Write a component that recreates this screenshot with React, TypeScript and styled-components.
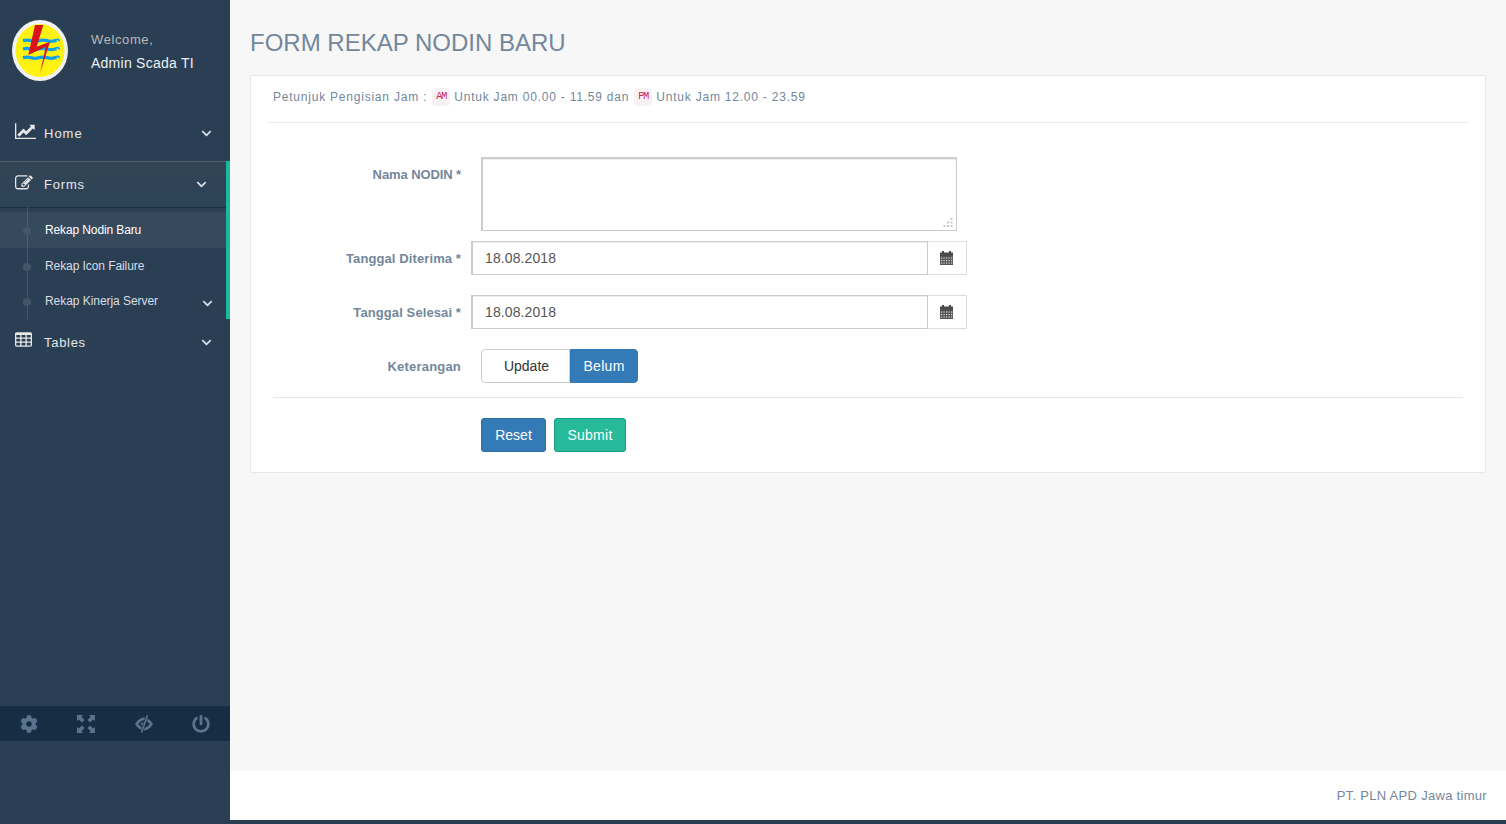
import React from "react";
import styled, { createGlobalStyle } from "styled-components";
import { FaChevronDown, FaCog, FaPowerOff } from "react-icons/fa";

const Global = createGlobalStyle`
  html, body { margin: 0; padding: 0; height: 100%; overflow: hidden; }
  body { font-family: "Liberation Sans", Arial, sans-serif; font-size: 13px; color: #73879C; background: #F7F7F7; }
  * { box-sizing: border-box; }
`;

const Shell = styled.div`
  display: grid;
  grid-template-columns: 230px 1fr;
  height: 824px;
`;

const Sidebar = styled.aside`
  display: grid;
  grid-template-rows: 706px 35px 1fr;
  background: #2A3F54;
`;

const SideTop = styled.div`
  display: flex;
  flex-direction: column;
`;

const Profile = styled.div`
  display: flex;
  height: 110px;
  padding: 20px 0 0 12px;
`;

const ProfileInfo = styled.div`
  margin-left: 23px;
  padding-top: 10px;
`;

const Welcome = styled.div`
  font-size: 13px;
  line-height: 20px;
  letter-spacing: 0.6px;
  color: #BAB8B8;
`;

const UserName = styled.div`
  margin-top: 3px;
  font-size: 14px;
  line-height: 20px;
  letter-spacing: 0.25px;
  color: #ECF0F1;
`;

const NavRow = styled.div<{ $active?: boolean }>`
  display: flex;
  align-items: center;
  height: 46px;
  padding: 0 ${(p) => (p.$active ? "19px" : "18px")} 0 15px;
  color: #E7E7E7;
  ${(p) =>
    p.$active &&
    `
    background: linear-gradient(#334556, #2C4257);
    box-shadow: rgba(0,0,0,.25) 0 1px 0, inset rgba(255,255,255,.16) 0 1px 0;
  `}
`;

const NavIcon = styled.span`
  display: flex;
  width: 29px;
  margin-top: -3px;
  color: #E7E7E7;
`;

const NavLabel = styled.span<{ $spacing: number }>`
  flex: 1;
  font-size: 13px;
  letter-spacing: ${(p) => p.$spacing}px;
`;

const Chevron = styled(FaChevronDown)`
  width: 11px;
  height: 11px;
  color: #D5DCE3;
`;

const Section = styled.div`
  border-right: 4px solid #1ABB9C;
`;

const SectionWrap = styled.div`
  margin-top: 5px;
`;

const SubMenu = styled.div`
  position: relative;
  padding-top: 5px;
  &::before {
    content: "";
    position: absolute;
    left: 27px;
    top: 0;
    bottom: 0;
    width: 1px;
    background: #425668;
  }
`;

const SubItem = styled.div<{ $active?: boolean; $h: number }>`
  position: relative;
  display: flex;
  align-items: center;
  height: ${(p) => p.$h}px;
  padding: 0 13px 0 45px;
  font-size: 12px;
  color: ${(p) => (p.$active ? "#FFFFFF" : "#D9DEE4")};
  background: ${(p) => (p.$active ? "rgba(255,255,255,0.06)" : "transparent")};
  &::before {
    content: "";
    position: absolute;
    left: 23px;
    top: 50%;
    margin-top: -3px;
    width: 8px;
    height: 8px;
    border-radius: 50%;
    background: #425668;
  }
`;

const SubLabel = styled.span<{ $spacing: number }>`
  flex: 1;
  letter-spacing: ${(p) => p.$spacing}px;
`;

const SubChevron = styled(Chevron)`
  margin-top: 4px;
`;

const SideFooter = styled.div`
  display: grid;
  grid-template-columns: repeat(4, 1fr);
  align-items: center;
  justify-items: center;
  background: #172D44;
  color: #5A738E;
  font-size: 18px;
`;

const FooterIcon = styled.span`
  display: flex;
`;

const Main = styled.main`
  display: grid;
  grid-template-rows: 1fr 49px 4px;
  min-width: 0;
`;

const Content = styled.div`
  padding: 0 20px;
`;

const Title = styled.h3`
  margin: 0;
  height: 75px;
  padding-top: 28px;
  font-size: 24px;
  line-height: 30px;
  font-weight: 400;
  color: #73879C;
`;

const Panel = styled.section`
  height: 398px;
  background: #fff;
  border: 1px solid #E6E9ED;
`;

const Note = styled.div`
  display: flex;
  align-items: center;
  height: 47px;
  margin: 0 17px;
  padding: 0 5px 5px;
  border-bottom: 1px solid #E6E9ED;
  font-size: 12px;
  letter-spacing: 0.78px;
  color: #73879C;
  white-space: pre;
`;

const Code = styled.code`
  display: inline-flex;
  align-items: center;
  justify-content: center;
  width: 18px;
  height: 18px;
  margin: 0 4px 0 1px;
  border-radius: 4px;
  background: #F9F2F4;
  color: #C7254E;
  font-family: "Liberation Mono", monospace;
  font-size: 10px;
  letter-spacing: -1px;
`;

const Form = styled.form`
  padding: 34px 10px 0;
`;

const Row = styled.div<{ $gap: number }>`
  display: grid;
  grid-template-columns: 200px 1fr;
  column-gap: 10px;
  margin-bottom: ${(p) => p.$gap}px;
`;

const Label = styled.label<{ $spacing?: number }>`
  padding-top: 8px;
  line-height: 20px;
  text-align: right;
  font-size: 13px;
  font-weight: 700;
  letter-spacing: ${(p) => p.$spacing ?? 0.1}px;
  color: #73879C;
`;

const TextareaWrap = styled.div`
  position: relative;
  width: 476px;
  height: 74px;
  margin-left: 10px;
`;

const Textarea = styled.textarea`
  display: block;
  width: 100%;
  height: 100%;
  border: 1px solid #CCCCCC;
  border-left-width: 2px;
  border-top-width: 2px;
  box-shadow: inset 0 1px 1px rgba(0, 0, 0, 0.075);
  outline: none;
  resize: none;
`;

const Grip = styled.svg`
  position: absolute;
  right: 4px;
  bottom: 3px;
`;

const InputGroup = styled.div`
  display: flex;
  width: 496px;
  height: 34px;
`;

const DateInput = styled.input`
  width: 457px;
  height: 34px;
  padding: 0 12px;
  border: 1px solid #CCCCCC;
  border-left-width: 2px;
  box-shadow: inset 0 1px 1px rgba(0, 0, 0, 0.075);
  font-family: "Liberation Sans", Arial, sans-serif;
  font-size: 14px;
  letter-spacing: 0.1px;
  color: #555555;
  outline: none;
`;

const Addon = styled.span`
  display: flex;
  align-items: center;
  justify-content: center;
  width: 39px;
  padding-right: 2px;
  border: 1px solid #DDDDDD;
  border-left: 0;
`;

const Toggle = styled.div`
  display: flex;
  margin-left: 10px;
`;

const ToggleButton = styled.button<{ $on?: boolean }>`
  height: 34px;
  width: ${(p) => (p.$on ? "68px" : "89px")};
  padding: 0 0 0 ${(p) => (p.$on ? "0" : "2px")};
  border: 1px solid ${(p) => (p.$on ? "#337AB7" : "#CCCCCC")};
  border-radius: ${(p) => (p.$on ? "0 4px 4px 0" : "4px 0 0 4px")};
  background: ${(p) => (p.$on ? "#337AB7" : "#FFFFFF")};
  color: ${(p) => (p.$on ? "#FFFFFF" : "#333333")};
  font-family: "Liberation Sans", Arial, sans-serif;
  font-size: 14px;
  letter-spacing: ${(p) => (p.$on ? "0.3px" : "0")};
`;

const Divider = styled.hr`
  height: 1px;
  margin: 14px 12px 20px;
  border: 0;
  background: #E5E5E5;
`;

const Actions = styled.div`
  display: flex;
  gap: 8px;
  margin-left: 220px;
`;

const ActionButton = styled.button<{ $kind: "primary" | "success" }>`
  height: 34px;
  width: ${(p) => (p.$kind === "primary" ? "65px" : "72px")};
  padding: 0;
  border: 1px solid ${(p) => (p.$kind === "primary" ? "#2E6DA4" : "#169F85")};
  border-radius: 3px;
  background: ${(p) => (p.$kind === "primary" ? "#337AB7" : "#26B99A")};
  color: #FFFFFF;
  font-family: "Liberation Sans", Arial, sans-serif;
  font-size: 14px;
  letter-spacing: ${(p) => (p.$kind === "primary" ? "0" : "0.25px")};
`;

const PageFooter = styled.footer`
  display: flex;
  align-items: center;
  justify-content: flex-end;
  padding: 0 19px 0 0;
  background: #FFFFFF;
  font-size: 13px;
  letter-spacing: 0.3px;
  color: #73879C;
`;

const BottomStrip = styled.div`
  background: #2A3F54;
`;

const Logo = () => (
  <svg width="56" height="61" viewBox="0 0 56 61">
    <ellipse cx="28" cy="30.5" rx="28" ry="30.5" fill="#F2F2F2" />
    <ellipse cx="28" cy="30.5" rx="24.5" ry="26.5" fill="#FFF212" />
    <g fill="none" stroke="#0FA0E8" strokeWidth="3.3">
      <path d="M11 20.700q4-1.200 8 0t8 0 8 0 8 0 3 0" />
      <path d="M11 29q4-1.200 8 0t8 0 8 0 8 0 3 0" />
      <path d="M11 37.700q4-1.200 8 0t8 0 8 0 8 0 3 0" />
    </g>
    <path d="M23 5L16.300 35L33.700 26.700L28 53.300L38 21.700L24.700 26.700L31.300 5z" fill="#D7141A" />
  </svg>
);

const LineChartIcon = () => (
  <svg width="21" height="18.400" viewBox="0 0 2048 1792" fill="#E7E7E7">
    <path d="M2048 1536v128h-2048v-1536h128v1408h1920zm-128-1248v435q0 21-19.500 29.500t-35.500-7.500l-121-121-633 633q-10 10-23 10t-23-10l-233-233-416 416-192-192 585-585q10-10 23-10t23 10l233 233 464-464-121-121q-16-16-7.500-35.500t29.500-19.500h435q14 0 23 9t9 23z" />
  </svg>
);

const EditIcon = () => (
  <svg width="18" height="18" viewBox="0 0 1800 1792" fill="#E7E7E7">
    <path d="M888 1184l116-116-152-152-116 116v56h96v96h56zm440-720q-16-16-33 1l-350 350q-17 17-1 33t33-1l350-350q17-17 1-33zm80 594v190q0 119-84.500 203.500t-203.500 84.500h-832q-119 0-203.500-84.500t-84.500-203.500v-832q0-119 84.500-203.500t203.500-84.500h832q63 0 117 25 15 7 18 23 3 17-9 29l-49 49q-14 14-32 8-23-6-45-6h-832q-66 0-113 47t-47 113v832q0 66 47 113t113 47h832q66 0 113-47t47-113v-126q0-13 9-22l64-64q15-15 35-7t20 29zm-96-738l288 288-672 672h-288v-288zm444 132l-92 92-288-288 92-92q28-28 68-28t68 28l152 152q28 28 28 68t-28 68z" />
  </svg>
);

const TableIcon = () => (
  <svg width="17" height="18.300" viewBox="0 0 1664 1792" fill="#E7E7E7">
    <path d="M512 1376v-192q0-14-9-23t-23-9h-320q-14 0-23 9t-9 23v192q0 14 9 23t23 9h320q14 0 23-9t9-23zm0-384v-192q0-14-9-23t-23-9h-320q-14 0-23 9t-9 23v192q0 14 9 23t23 9h320q14 0 23-9t9-23zm512 384v-192q0-14-9-23t-23-9h-320q-14 0-23 9t-9 23v192q0 14 9 23t23 9h320q14 0 23-9t9-23zm-512-768v-192q0-14-9-23t-23-9h-320q-14 0-23 9t-9 23v192q0 14 9 23t23 9h320q14 0 23-9t9-23zm512 384v-192q0-14-9-23t-23-9h-320q-14 0-23 9t-9 23v192q0 14 9 23t23 9h320q14 0 23-9t9-23zm512 384v-192q0-14-9-23t-23-9h-320q-14 0-23 9t-9 23v192q0 14 9 23t23 9h320q14 0 23-9t9-23zm-512-768v-192q0-14-9-23t-23-9h-320q-14 0-23 9t-9 23v192q0 14 9 23t23 9h320q14 0 23-9t9-23zm512 384v-192q0-14-9-23t-23-9h-320q-14 0-23 9t-9 23v192q0 14 9 23t23 9h320q14 0 23-9t9-23zm0-384v-192q0-14-9-23t-23-9h-320q-14 0-23 9t-9 23v192q0 14 9 23t23 9h320q14 0 23-9t9-23zm128-320v1088q0 66-47 113t-113 47h-1344q-66 0-113-47t-47-113v-1088q0-66 47-113t113-47h1344q66 0 113 47t47 113z" />
  </svg>
);

const CalendarIcon = () => (
  <svg width="13" height="14" viewBox="0 0 13 14">
    <path d="M0 1.500h2V0h2v1.500h5V0h2v1.500h2V6H0z" fill="#4A4A4A" />
    <rect y="5" width="13" height="9" fill="#555555" />
    <g fill="#E4E8EC">
      {[1, 3.5, 6, 8.5, 11].map((x) =>
        [6.5, 9, 11.5].map((y) => <rect key={`${x}-${y}`} x={x} y={y} width="1.200" height="1.100" />)
      )}
    </g>
  </svg>
);

const FullscreenIcon = () => (
  <svg width="18" height="18" viewBox="0 0 18 18" fill="#5A738E">
    <path d="M0 0h6L4.400 1.700 7.500 5 5 7.500 1.700 4.400 0 6z" />
    <path d="M18 0v6l-1.700-1.600L13 7.500 10.500 5l3.100-3.300L12 0z" />
    <path d="M0 18v-6l1.700 1.600L5 10.500 7.500 13l-3.100 3.300L6 18z" />
    <path d="M18 18h-6l1.600-1.700L10.500 13l2.500-2.500 3.300 3.100L18 12z" />
  </svg>
);

const EyeCloseIcon = () => (
  <svg width="18" height="18" viewBox="0 0 18 18">
    <path
      fillRule="evenodd"
      fill="#5A738E"
      d="M0 9Q4 2.500 9 2.500Q14 2.500 18 9Q14 15.500 9 15.500Q4 15.500 0 9ZM3.200 9Q6 12.800 9 12.800Q12 12.800 14.800 9Q12 5.200 9 5.200Q6 5.200 3.200 9Z"
    />
    <circle cx="7.800" cy="9" r="1.800" fill="#5A738E" />
    <path d="M12.500 0L6.500 18" stroke="#172D44" strokeWidth="2.800" />
    <path d="M12.500 0.300L6.500 17.700" stroke="#5A738E" strokeWidth="1.600" />
  </svg>
);

const GripDots = () => (
  <Grip width="10" height="10" viewBox="0 0 10 10" fill="#C8C8C8">
    <rect x="7.500" y="0" width="2" height="2" />
    <rect x="4" y="3.500" width="2" height="2" />
    <rect x="7.500" y="3.500" width="2" height="2" />
    <rect x="0.500" y="7" width="2" height="2" />
    <rect x="4" y="7" width="2" height="2" />
    <rect x="7.500" y="7" width="2" height="2" />
  </Grip>
);

export default function App() {
  return (
    <>
      <Global />
      <Shell>
        <Sidebar>
          <SideTop>
            <Profile>
              <Logo />
              <ProfileInfo>
                <Welcome>Welcome,</Welcome>
                <UserName>Admin Scada TI</UserName>
              </ProfileInfo>
            </Profile>
            <NavRow>
              <NavIcon><LineChartIcon /></NavIcon>
              <NavLabel $spacing={1}>Home</NavLabel>
              <Chevron />
            </NavRow>
            <SectionWrap>
              <Section>
                <NavRow $active>
                  <NavIcon><EditIcon /></NavIcon>
                  <NavLabel $spacing={0.8}>Forms</NavLabel>
                  <Chevron />
                </NavRow>
                <SubMenu>
                  <SubItem $active $h={36}><SubLabel $spacing={-0.12}>Rekap Nodin Baru</SubLabel></SubItem>
                  <SubItem $h={35.5}><SubLabel $spacing={-0.08}>Rekap Icon Failure</SubLabel></SubItem>
                  <SubItem $h={35.5}>
                    <SubLabel $spacing={-0.05}>Rekap Kinerja Server</SubLabel>
                    <SubChevron />
                  </SubItem>
                </SubMenu>
              </Section>
            </SectionWrap>
            <NavRow>
              <NavIcon><TableIcon /></NavIcon>
              <NavLabel $spacing={0.7}>Tables</NavLabel>
              <Chevron />
            </NavRow>
          </SideTop>
          <SideFooter>
            <FooterIcon><FaCog /></FooterIcon>
            <FooterIcon><FullscreenIcon /></FooterIcon>
            <FooterIcon><EyeCloseIcon /></FooterIcon>
            <FooterIcon><FaPowerOff /></FooterIcon>
          </SideFooter>
          <div />
        </Sidebar>
        <Main>
          <Content>
            <Title>FORM REKAP NODIN BARU</Title>
            <Panel>
              <Note>
                Petunjuk Pengisian Jam : <Code>AM</Code>Untuk Jam 00.00 - 11.59 dan <Code>PM</Code>Untuk Jam 12.00 - 23.59
              </Note>
              <Form>
                <Row $gap={10}>
                  <Label $spacing={-0.1}>Nama NODIN *</Label>
                  <TextareaWrap>
                    <Textarea />
                    <GripDots />
                  </TextareaWrap>
                </Row>
                <Row $gap={20}>
                  <Label>Tanggal Diterima *</Label>
                  <InputGroup>
                    <DateInput defaultValue="18.08.2018" />
                    <Addon><CalendarIcon /></Addon>
                  </InputGroup>
                </Row>
                <Row $gap={20}>
                  <Label>Tanggal Selesai *</Label>
                  <InputGroup>
                    <DateInput defaultValue="18.08.2018" />
                    <Addon><CalendarIcon /></Addon>
                  </InputGroup>
                </Row>
                <Row $gap={0}>
                  <Label $spacing={0.2}>Keterangan</Label>
                  <Toggle>
                    <ToggleButton type="button">Update</ToggleButton>
                    <ToggleButton type="button" $on>Belum</ToggleButton>
                  </Toggle>
                </Row>
                <Divider />
                <Actions>
                  <ActionButton type="button" $kind="primary">Reset</ActionButton>
                  <ActionButton type="button" $kind="success">Submit</ActionButton>
                </Actions>
              </Form>
            </Panel>
          </Content>
          <PageFooter>PT. PLN APD Jawa timur</PageFooter>
          <BottomStrip />
        </Main>
      </Shell>
    </>
  );
}
